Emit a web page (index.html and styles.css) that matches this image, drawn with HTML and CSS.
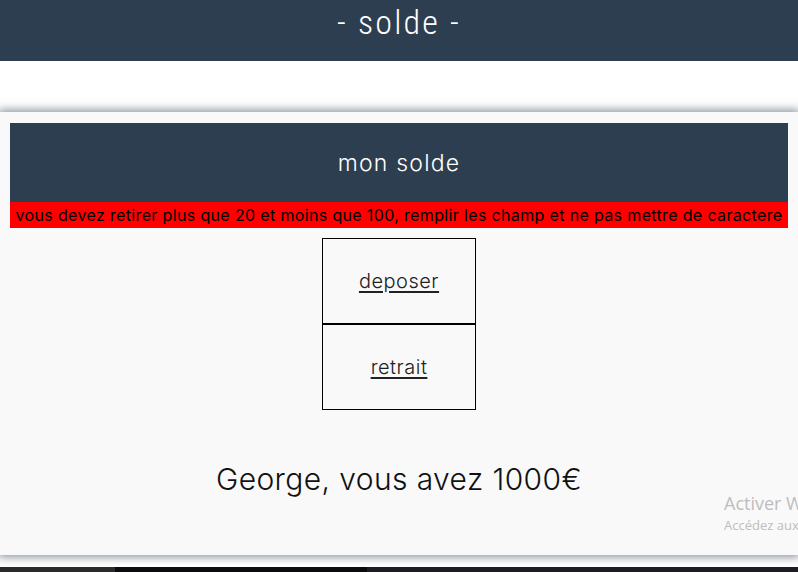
FILE: index.html
```html
<!DOCTYPE html>
<html lang="fr">
<head>
<meta charset="utf-8">
<title>solde</title>
<link rel="stylesheet" href="styles.css">
</head>
<body>
<header class="top">
  <h1 class="top-title">- solde -</h1>
</header>
<main class="page">
  <section class="card">
    <div class="card-head">mon solde</div>
    <div class="alert">vous devez retirer plus que 20 et moins que 100, remplir les champ et ne pas mettre de caractere</div>
    <nav class="actions">
      <a class="action" href="#">deposer</a>
      <a class="action" href="#">retrait</a>
    </nav>
    <p class="balance">George, vous avez 1000€</p>
  </section>
</main>
<div class="taskbar">
  <span class="tb tb-a"></span><span class="tb tb-b"></span><span class="tb tb-c"></span>
</div>
<div class="watermark">
  <div class="wm-title">Activer Windows</div>
  <div class="wm-sub">Accédez aux paramètres pour activer Windows.</div>
</div>
</body>
</html>
```
FILE: styles.css
```css
html, body {
  margin: 0;
  padding: 0;
}
body {
  background: #ffffff;
  font-family: Inter, "DejaVu Sans", sans-serif;
  height: 572px;
  overflow: hidden;
  position: relative;
}
.top {
  background: #2d3e50;
  height: 61px;
}
.top-title {
  margin: 0;
  text-align: center;
  color: #ffffff;
  font-family: "Roboto Condensed", "Liberation Sans Narrow", Roboto, sans-serif;
  font-weight: 300;
  font-size: 34px;
  letter-spacing: 2.2px;
  line-height: 45px;
}
.page {
  padding-top: 51px;
}
.card {
  background: #f9f9f9;
  height: 443px;
  padding: 11px 10px 0;
  box-sizing: border-box;
  box-shadow: 0 0 9px 2px rgba(40, 52, 70, 0.55);
  display: flex;
  flex-direction: column;
  align-items: center;
}
.card-head {
  align-self: stretch;
  background: #2d3e50;
  color: #ffffff;
  height: 79px;
  display: flex;
  align-items: center;
  justify-content: center;
  font-size: 23px;
  letter-spacing: 1.2px;
  font-weight: 300;
}
.alert {
  align-self: stretch;
  background: #ff0000;
  color: #000000;
  height: 26px;
  line-height: 26px;
  text-align: center;
  font-size: 16px;
  letter-spacing: 0.35px;
  font-weight: 400;
  white-space: nowrap;
}
.actions {
  margin-top: 10px;
  display: flex;
  flex-direction: column;
}
.action {
  width: 154px;
  height: 86px;
  box-sizing: border-box;
  border: 1px solid #000000;
  display: flex;
  align-items: center;
  justify-content: center;
  color: #222222;
  font-size: 20px;
  letter-spacing: 0.5px;
  font-weight: 300;
  text-decoration: underline;
  text-underline-offset: 3px;
}
.balance {
  margin: 51px 0 0;
  font-size: 30px;
  letter-spacing: 0.4px;
  font-weight: 300;
  color: #111111;
}
.taskbar {
  position: absolute;
  left: 0;
  right: 0;
  bottom: 0;
  height: 5px;
  display: flex;
}
.tb-a { width: 115px; background: #2a2a2a; }
.tb-b { width: 252px; background: #0b0b0e; }
.tb-c { flex: 1; background: #1c1c22; }
.watermark {
  position: absolute;
  left: 724px;
  top: 491px;
  white-space: nowrap;
  color: #bdbdbd;
  font-family: "Open Sans", "Liberation Sans", sans-serif;
}
.wm-title { font-size: 18px; line-height: 24px; }
.wm-sub { font-size: 13px; line-height: 20px; }
```
